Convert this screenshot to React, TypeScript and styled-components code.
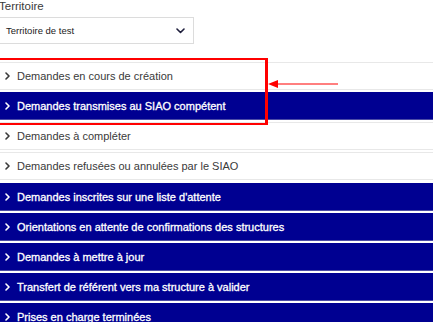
import React from "react";
import styled, { createGlobalStyle } from "styled-components";

const Global = createGlobalStyle`
  html, body { margin: 0; padding: 0; background: #fff; overflow: hidden; }
  body { font-family: "Liberation Sans", Arial, sans-serif; color: #3a3a3a; }
`;

const Page = styled.div`
  position: relative;
  width: 450px;
  margin-left: -3px;
`;

const Field = styled.div`
  display: flex;
  flex-direction: column;
  padding-left: 2px;
`;

const Label = styled.label`
  font-size: 11.5px;
  line-height: 14px;
  color: #3a3a3a;
  margin-top: -1px;
`;

const Select = styled.div`
  margin-top: 4px;
  width: 195px;
  height: 27px;
  box-sizing: border-box;
  border: 1px solid #dcdcdc;
  display: flex;
  align-items: center;
  justify-content: space-between;
  padding: 0 8px 0 6px;
  font-size: 9.5px;
  color: #222;
`;

const List = styled.div`
  margin-top: 18px;
  display: flex;
  flex-direction: column;
  gap: 2.15px;
`;

const Item = styled.div<{ $active?: boolean }>`
  height: 28px;
  box-sizing: border-box;
  display: flex;
  align-items: center;
  gap: 7px;
  padding-left: 8px;
  font-size: 11px;
  color: ${(p) => (p.$active ? "#fff" : "#3a3a3a")};
  -webkit-text-stroke: ${(p) => (p.$active ? "0.3px #fff" : "0")};
  background: ${(p) => (p.$active ? "#000091" : "#fff")};
  border-top: 1px solid ${(p) => (p.$active ? "#000091" : "#e8e8e8")};
  border-bottom: 1px solid ${(p) => (p.$active ? "#4b4ba6" : "#e8e8e8")};
`;

const Highlight = styled.div`
  position: absolute;
  left: -4px;
  top: 58px;
  width: 275px;
  height: 67px;
  box-sizing: border-box;
  border: 2px solid #ff0000;
  border-right-width: 3px;
  pointer-events: none;
`;

const Arrow = styled.svg`
  position: absolute;
  left: 271px;
  top: 79px;
  overflow: visible;
`;

const Chevron = ({ color }: { color: string }) => (
  <svg width="5" height="8" viewBox="0 0 5 8">
    <path d="M1 1 L4 4 L1 7" fill="none" stroke={color} strokeWidth="1.6" strokeLinecap="round" strokeLinejoin="round" />
  </svg>
);

const ChevronDown = () => (
  <svg width="9" height="6" viewBox="0 0 9 6">
    <path d="M1 1 L4.5 4.5 L8 1" fill="none" stroke="#1e1e3c" strokeWidth="1.6" strokeLinecap="round" strokeLinejoin="round" />
  </svg>
);

const items: { label: string; active: boolean }[] = [
  { label: "Demandes en cours de création", active: false },
  { label: "Demandes transmises au SIAO compétent", active: true },
  { label: "Demandes à compléter", active: false },
  { label: "Demandes refusées ou annulées par le SIAO", active: false },
  { label: "Demandes inscrites sur une liste d'attente", active: true },
  { label: "Orientations en attente de confirmations des structures", active: true },
  { label: "Demandes à mettre à jour", active: true },
  { label: "Transfert de référent vers ma structure à valider", active: true },
  { label: "Prises en charge terminées", active: true },
];

export default function App() {
  return (
    <Page>
      <Global />
      <Field>
        <Label>Territoire</Label>
        <Select>
          <span>Territoire de test</span>
          <ChevronDown />
        </Select>
      </Field>
      <List>
        {items.map((it) => (
          <Item key={it.label} $active={it.active}>
            <Chevron color={it.active ? "#fff" : "#3a3a3a"} />
            <span>{it.label}</span>
          </Item>
        ))}
      </List>
      <Highlight />
      <Arrow width="70" height="10" viewBox="0 0 70 10">
        <polygon points="0,5 10,1 10,9" fill="#ff0000" />
        <line x1="9" y1="5" x2="70" y2="5" stroke="#ff0000" strokeWidth="1.2" />
      </Arrow>
    </Page>
  );
}
